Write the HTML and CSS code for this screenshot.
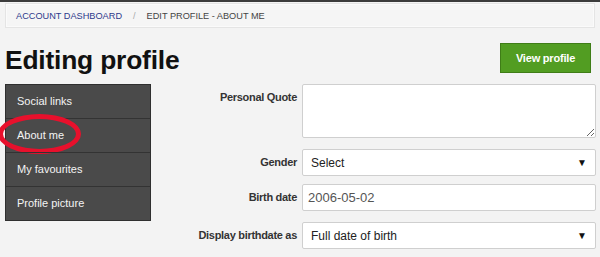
FILE: index.html
```html
<!DOCTYPE html>
<html>
<head>
<meta charset="utf-8">
<link rel="stylesheet" href="styles.css">
</head>
<body>
<div class="topline"></div>
<nav class="crumbs">
  <a class="crumb-link" href="#">Account Dashboard</a>
  <span class="crumb-sep">/</span>
  <span class="crumb-current">Edit profile - About me</span>
</nav>
<main class="page">
  <header class="page-head">
    <h1 class="title">Editing profile</h1>
    <a class="btn-view" href="#">View profile</a>
  </header>
  <div class="content">
    <aside class="side">
      <ul class="side-menu">
        <li class="side-item">Social links</li>
        <li class="side-item side-item--active">About me<span class="mark"></span></li>
        <li class="side-item">My favourites</li>
        <li class="side-item">Profile picture</li>
      </ul>
    </aside>
    <form class="form">
      <div class="row row--quote">
        <label class="lbl">Personal Quote</label>
        <textarea class="field area"></textarea>
      </div>
      <div class="row row--gender">
        <label class="lbl">Gender</label>
        <div class="field select"><span>Select</span><span class="caret">&#9660;</span></div>
      </div>
      <div class="row row--birth">
        <label class="lbl">Birth date</label>
        <div class="field input">2006-05-02</div>
      </div>
      <div class="row row--display">
        <label class="lbl">Display birthdate as</label>
        <div class="field select"><span>Full date of birth</span><span class="caret">&#9660;</span></div>
      </div>
    </form>
  </div>
</main>
</body>
</html>
```

FILE: styles.css
```css
* { box-sizing: border-box; }
html, body { margin: 0; padding: 0; }
body {
  background: #f3f3f3;
  font-family: "Liberation Sans", Arial, sans-serif;
  color: #222;
  width: 600px;
  height: 257px;
  overflow: hidden;
}
.topline { height: 2px; background: #3b3b3b; }
.crumbs {
  margin: 1px 5px 0 5px;
  height: 25px;
  border: 1px solid #e4e4e4;
  box-shadow: inset 0 0 0 1px #fafafa;
  background: #f5f5f5;
  display: flex;
  align-items: center;
  padding-left: 10px;
  font-size: 9.2px;
  text-transform: uppercase;
}
.crumb-link { color: #2d3a8c; text-decoration: none; }
.crumb-sep { color: #aaa; margin: 0 11px 0 11px; }
.crumb-current { color: #444; }
.page { padding: 0 4px 0 5px; }
.page-head {
  display: flex;
  justify-content: space-between;
  align-items: flex-start;
  margin-top: 15px;
  height: 41px;
}
.title {
  margin: 2px 0 0 0;
  font-size: 26.4px;
  line-height: 30px;
  font-weight: bold;
  color: #111;
  letter-spacing: -0.2px;
}
.btn-view {
  margin-right: 5px;
  width: 91px;
  height: 30px;
  background: #529d22;
  border: 1px solid #3f7d17;
  color: #fff;
  font-weight: bold;
  font-size: 11px;
  letter-spacing: -0.2px;
  text-decoration: none;
  display: flex;
  align-items: center;
  justify-content: center;
}
.content {
  display: grid;
  grid-template-columns: 146px 1fr;
}
.side { position: relative; }
.side-menu {
  list-style: none;
  margin: 0;
  padding: 0;
  background: #4a4a4a;
  border: 1px solid #2f2f2f;
}
.side-item {
  position: relative;
  height: 34px;
  line-height: 33px;
  padding-left: 11px;
  font-size: 11px;
  color: #f4f4f4;
  border-top: 1px solid #333;
}
.side-item:first-child { border-top: none; height: 33px; }
.mark {
  position: absolute;
  left: -8px;
  top: -5px;
  width: 83px;
  height: 40px;
  border: 5px solid #e8102c;
  border-radius: 50%;
}
.form { display: flex; flex-direction: column; }
.row {
  display: grid;
  grid-template-columns: 1fr 294px;
  column-gap: 5px;
  align-items: start;
}
.row--gender { margin-top: 11px; }
.row--birth { margin-top: 8px; }
.row--display { margin-top: 11px; }
.lbl {
  text-align: right;
  font-size: 11px;
  letter-spacing: -0.3px;
  font-weight: bold;
  color: #333;
  line-height: 27px;
}
.field {
  background: #fff;
  border: 1px solid #cfcfcf;
  border-radius: 2px;
  font-family: "Liberation Sans", Arial, sans-serif;
}
.area { height: 54px; resize: vertical; display: block; width: 100%; margin: 0; }
.select, .input {
  height: 27px;
  display: flex;
  align-items: center;
  justify-content: space-between;
}
.select { color: #222; font-size: 12px; padding: 0 8px 0 8px; }
.input { color: #555; font-size: 13px; padding: 0 5px; }
.caret { font-size: 10px; color: #111; }
```
